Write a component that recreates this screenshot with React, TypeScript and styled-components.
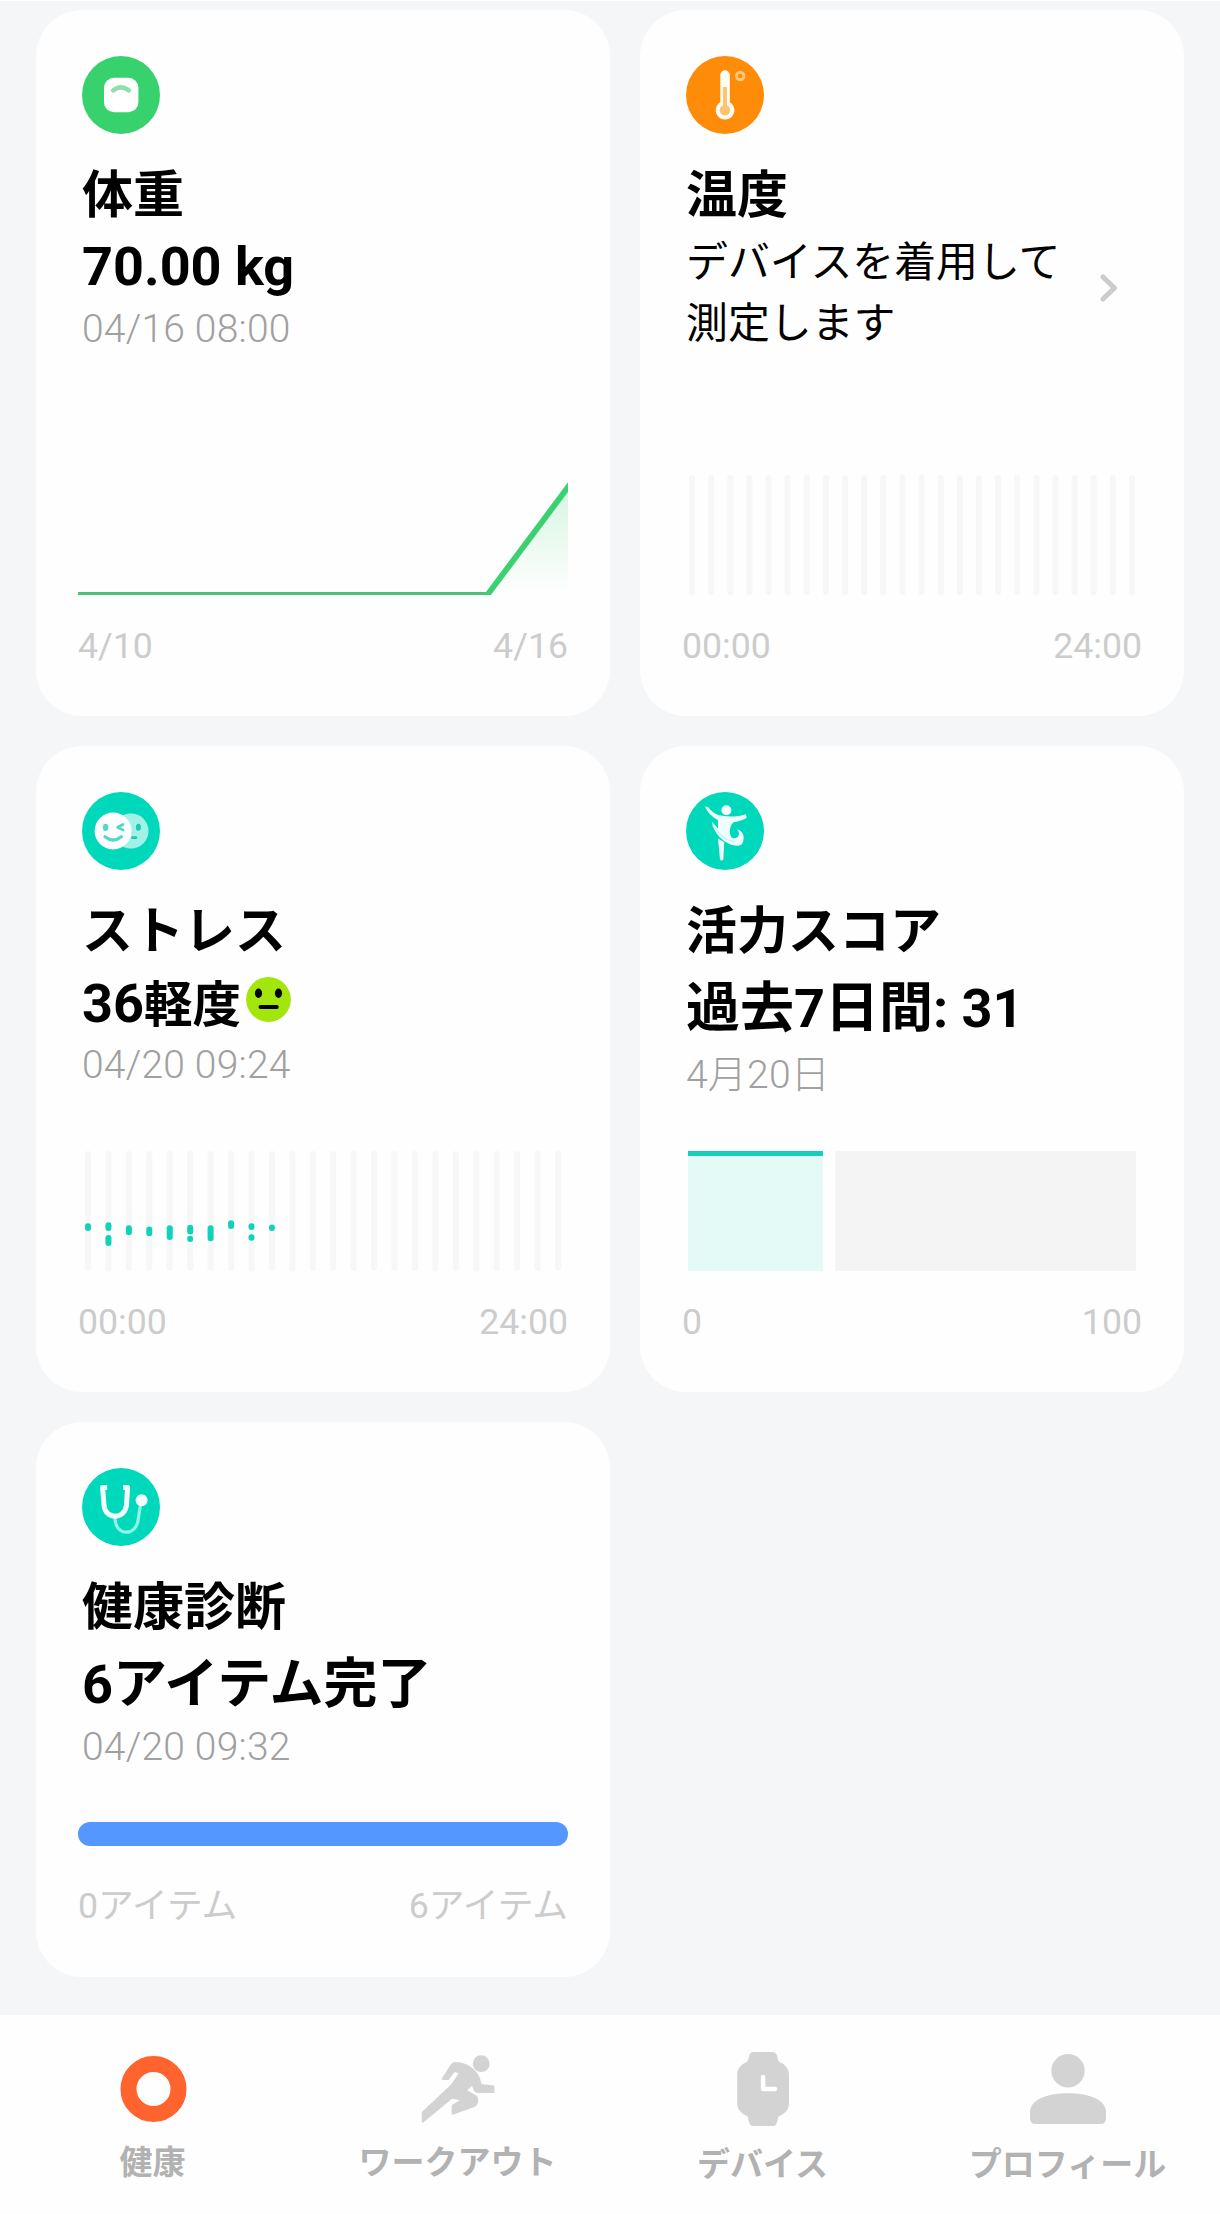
import React from 'react';
import styled, { createGlobalStyle } from 'styled-components';

const GlobalStyle = createGlobalStyle`
  *, *::before, *::after { box-sizing: border-box; }
  body {
    margin: 0;
    background: #f5f6f8;
    font-family: Roboto, "Noto Sans CJK JP", sans-serif;
    color: #000;
  }
  svg { display: block; flex: none; }
`;

const Screen = styled.div`
  width: 1220px;
  height: 2214px;
  display: flex;
  flex-direction: column;
  background: #f5f6f8;
  border-top: 1px solid #fff;
  overflow: hidden;
`;

const CardGrid = styled.main`
  flex: 1;
  display: grid;
  grid-template-columns: 574px 544px;
  grid-template-rows: 706px 646px 555px;
  gap: 30px;
  padding: 9px 36px 0;
`;

const Card = styled.section`
  display: flex;
  flex-direction: column;
  padding: 46px 42px 46px;
  border-radius: 46px;
  background: #fefefe;
`;

const Summary = styled.div`
  display: flex;
  flex-direction: column;
  padding-left: 4px;
`;

const Title = styled.h2`
  margin: 25px 0 -1px;
  font-size: 51px;
  font-weight: 700;
  line-height: 73px;
  white-space: nowrap;
`;

const Value = styled.div<{ $tall?: boolean }>`
  display: flex;
  align-items: center;
  height: ${(p) => (p.$tall ? 81 : 71)}px;
  padding-top: ${(p) => (p.$tall ? 1 : 0)}px;
  font-size: 54px;
  font-weight: 700;
  line-height: 71px;
  white-space: nowrap;
`;

const Reading = styled.span`
  padding-top: 3px;
`;

const Level = styled.span`
  font-size: 48.5px;
  margin-right: 5px;
`;

const DateText = styled.time<{ $height?: number }>`
  padding-top: 1px;
  font-size: 39px;
  font-weight: 300;
  letter-spacing: 0.22px;
  line-height: ${(p) => p.$height ?? 53}px;
  color: #a0a0a0;
  white-space: nowrap;
`;

const HintRow = styled.div`
  display: flex;
  align-items: center;
  justify-content: space-between;
  padding-right: 24px;
`;

const Hint = styled.p`
  margin: 1px 0 0;
  font-size: 41.9px;
  line-height: 61px;
  white-space: nowrap;
`;

const ChartArea = styled.div<{ $gap?: number }>`
  margin-top: auto;
  margin-bottom: ${(p) => p.$gap ?? 27}px;
`;

const Axis = styled.div<{ $lift?: number }>`
  display: flex;
  justify-content: space-between;
  padding-bottom: ${(p) => p.$lift ?? 0}px;
  font-size: 35.7px;
  line-height: 48px;
  color: #ccc;
`;

const ScoreBar = styled.div`
  display: grid;
  grid-template-columns: 135px 1fr;
  gap: 12px;
  height: 120px;
  padding: 0 6px;
`;

const ScoreDone = styled.div`
  border-top: 5px solid #17cfb8;
  background: #e3faf7;
`;

const ScoreRest = styled.div`
  background: #f4f4f4;
`;

const Progress = styled.div`
  height: 24px;
  border-radius: 12px;
  background: #5497ff;
`;

const TabBar = styled.nav`
  display: grid;
  grid-template-columns: repeat(4, 1fr);
  height: 199px;
  padding-top: 34px;
  background: #fefefe;
`;

const Tab = styled.div`
  display: flex;
  flex-direction: column;
  align-items: center;
`;

const TabLabel = styled.span<{ $drop?: number }>`
  margin-top: ${(p) => 14 + (p.$drop ?? 0)}px;
  font-size: 33px;
  font-weight: 700;
  line-height: 40px;
  color: #b2b2b2;
  white-space: nowrap;
`;

const Badge = ({ color, children }: { color: string; children: React.ReactNode }) => (
  <svg width="78" height="78" viewBox="0 0 78 78">
    <circle cx="39" cy="39" r="39" fill={color} />
    {children}
  </svg>
);

const TEAL = '#00d8bc';

const ScaleIcon = () => (
  <Badge color="#37d26d">
    <rect x="22" y="21.7" width="34.4" height="34.6" rx="10" fill="#fff" />
    <path d="M31.2 34.3Q39 28.6 46.8 34.3" fill="none" stroke="#90dfae" strokeWidth="4.6" strokeLinecap="round" />
  </Badge>
);

const ThermometerIcon = () => (
  <Badge color="#ff8c09">
    <path d="M34.3 19a4.75 4.75 0 0 1 9.5 0v27.2a9.3 9.3 0 1 1-9.5 0z" fill="#fffdf5" />
    <path d="M38.95 31v20" stroke="#ffc26e" strokeWidth="4" />
    <circle cx="38.95" cy="54.3" r="5.3" fill="#ffc26e" />
    <circle cx="54.2" cy="20" r="3.7" fill="none" stroke="#ffc77c" strokeWidth="3" />
  </Badge>
);

const StressIcon = () => (
  <Badge color={TEAL}>
    <circle cx="48.9" cy="39" r="17.6" fill="#a2f1e6" />
    <circle cx="31.1" cy="39" r="18.5" fill="#fff" />
    <g fill="none" stroke="#52d8c6" strokeWidth="2.8" strokeLinecap="round" strokeLinejoin="round">
      <path d="M41 32.4l-5.4 2.9 5.4 2.7" />
      <path d="M23 44.8q8.2 6.4 16.4 0" strokeWidth="3.2" />
    </g>
    <path d="M50.6 45.7h3.2" stroke="#19c9b1" strokeWidth="2.8" strokeLinecap="round" />
    <ellipse cx="23.6" cy="35.3" rx="2.8" ry="3.6" fill="#52d8c6" />
    <ellipse cx="56.4" cy="35.3" rx="2.5" ry="3.5" fill="#19c9b1" />
  </Badge>
);

const VitalityIcon = () => (
  <Badge color={TEAL}>
    <circle cx="40.4" cy="18.3" r="5" fill="#f4fffd" />
    <path
      d="M19 14.3L22.6 15.5C25 19.5 30 22.8 35 23.6C44 25.4 53 24.6 59.8 22.2L60.8 25.7C57 28.6 51 29.4 47.3 30.3C44.6 33 44 36.5 43.8 40C44 44.5 46 46.7 48.8 46.3C53 45.8 54.6 41 51.1 37.3C56 39 57.8 42.5 57.6 46C57.6 51 55.8 53.4 52 53.8C45 54 38 49.4 33.5 45C29 40 26.6 35 25.8 29.7C28 31.7 30.5 34.5 32 36.5L32 28.2C26 25 21 20 19 14.3Z"
      fill="#effffc"
    />
    <path d="M32 46.3Q35 48.8 38.2 50L37.3 67.5Q35.6 69.5 34 67.5Z" fill="#effffc" />
    <path d="M29 36Q37 48 49 50" fill="none" stroke="#bff3ea" strokeWidth="1.2" />
  </Badge>
);

const StethoscopeIcon = () => (
  <Badge color={TEAL}>
    <path
      d="M33 50C33 68.5 54.5 69 56.3 51L58.6 36"
      fill="none"
      stroke="#8df5e7"
      strokeWidth="3.2"
    />
    <path
      d="M25.2 19.4h-4.6L22 37C23 52 43 52 44.5 37L45.6 19.4h-4.6"
      fill="none"
      stroke="#f2fffd"
      strokeWidth="5"
      strokeLinejoin="round"
    />
    <circle cx="59.6" cy="32.3" r="6" fill="#f2fffd" />
  </Badge>
);

const NeutralFace = () => (
  <svg width="45" height="45" viewBox="0 0 45 45" transform="translate(0 -3)">
    <circle cx="22.5" cy="22.5" r="22.4" fill="#a2e60c" />
    <ellipse cx="12.5" cy="16.3" rx="3.6" ry="4.7" />
    <ellipse cx="32.5" cy="16.3" rx="3.6" ry="4.7" />
    <path d="M14.6 30h16" stroke="#000" strokeWidth="4.2" strokeLinecap="round" />
  </svg>
);

const Chevron = () => (
  <svg width="18" height="28" viewBox="0 0 18 28" transform="translate(0 -5)">
    <path d="M3 3l11.4 11L3 25" fill="none" stroke="#ccc" strokeWidth="5" strokeLinecap="round" strokeLinejoin="round" />
  </svg>
);

const WeightChart = () => (
  <svg width="490" height="120" viewBox="0 0 490 120">
    <defs>
      <linearGradient id="weightFill" x1="0" y1="0" x2="0" y2="1">
        <stop offset="0" stopColor="#37d26d" stopOpacity="0.2" />
        <stop offset="1" stopColor="#37d26d" stopOpacity="0" />
      </linearGradient>
    </defs>
    <path d="M410 118.5L490 11V118.5Z" fill="url(#weightFill)" />
    <path d="M0 118.5H411" stroke="#50bf7a" strokeWidth="3" />
    <path d="M409 120.4L494 6.8" fill="none" stroke="#3bd070" strokeWidth="5.8" />
  </svg>
);

type Sample = { hour: number; from: number; to: number };

const STRESS_SAMPLES: Sample[] = [
  { hour: 0, from: 72.3, to: 80 },
  { hour: 1, from: 71.3, to: 80 },
  { hour: 1, from: 84, to: 95 },
  { hour: 2, from: 74.3, to: 84.3 },
  { hour: 3, from: 75.5, to: 85.3 },
  { hour: 4, from: 74.3, to: 89 },
  { hour: 5, from: 73.7, to: 83.5 },
  { hour: 5, from: 84.8, to: 91 },
  { hour: 6, from: 74.3, to: 90.3 },
  { hour: 7, from: 69.3, to: 78 },
  { hour: 8, from: 72.3, to: 79 },
  { hour: 8, from: 83.2, to: 89.7 },
  { hour: 9, from: 73.6, to: 80 },
];

const HourChart = ({ width, samples = [] }: { width: number; samples?: Sample[] }) => {
  const barX = (hour: number) => 7 + (hour * (width - 20)) / 23;
  return (
    <svg width={width} height="120" viewBox={`0 0 ${width} 120`}>
      {Array.from({ length: 24 }, (_, hour) => (
        <rect key={hour} x={barX(hour)} width="6" height="120" rx="3" fill="#f6f7f8" />
      ))}
      {samples.map((s) => (
        <rect
          key={`${s.hour}-${s.from}`}
          x={barX(s.hour)}
          y={s.from}
          width="6"
          height={s.to - s.from}
          rx="3"
          fill="#0fd2b9"
        />
      ))}
    </svg>
  );
};

const HealthTabIcon = () => (
  <svg width="80" height="80" viewBox="0 0 80 80">
    <circle cx="40.5" cy="40" r="25" fill="none" stroke="#ff632e" strokeWidth="16" />
  </svg>
);

const WorkoutTabIcon = () => (
  <svg width="80" height="80" viewBox="0 0 80 80" fill="#d3d3d3">
    <circle cx="63.2" cy="14.7" r="8.4" />
    <path d="M37 13Q34 13 32.4 16L23.9 29.6Q23.4 31 24.5 31H30.5L36.3 23.6Q37.2 22.8 38.5 23.5L40.5 24.6Q36 31.5 33 35.5L4.4 62.5Q3.8 63.2 3.8 64.2V73Q4.4 74.3 5.6 73.2L34.1 49.8L42 51.3L34.6 55.6Q33.7 56.2 33.7 57.2V65Q34.2 66.2 35.4 65.5L56.5 58Q59.7 56.4 60.1 53.2V49.5Q60 47.8 58.2 46.6L49.1 41.2L54 36.8L55.8 41.5Q57 43.8 59.6 43.9H75.4Q76.4 43.8 76.4 42.7V37.6Q76.3 36.8 75.4 36.6L63.6 35C62 27.5 60 24.5 55.6 20.2C51 15.6 45 13.3 37 13Z" />
  </svg>
);

const DeviceTabIcon = () => (
  <svg width="80" height="80" viewBox="0 0 80 80">
    <path
      d="M30.8 3H49.4Q53 3 54 6.6L55.2 11.5Q55.5 12.7 56.8 13.3C62.5 15.6 66 20 66 26V54C66 60 62.5 64.4 56.8 66.7Q55.5 67.3 55.2 68.5L54 73.4Q53 77 49.4 77H30.8Q27.2 77 26.2 73.4L25 68.5Q24.7 67.3 23.4 66.7C17.7 64.4 14.2 60 14.2 54V26C14.2 20 17.7 15.6 23.4 13.3Q24.7 12.7 25 11.5L26.2 6.6Q27.2 3 30.8 3Z"
      fill="#d3d3d3"
    />
    <path d="M40.1 28V40H52" fill="none" stroke="#fff" strokeWidth="4.5" strokeLinecap="round" strokeLinejoin="round" />
  </svg>
);

const ProfileTabIcon = () => (
  <svg width="80" height="80" viewBox="0 0 80 80" fill="#d3d3d3">
    <circle cx="40" cy="21.7" r="16.7" />
    <path d="M2 63C2 51 18.5 44.3 40 44.3S78 51 78 63V69Q78 75 72 75H8Q2 75 2 69Z" />
  </svg>
);

export default function App() {
  return (
    <>
      <GlobalStyle />
      <Screen>
        <CardGrid>
          <Card>
            <Summary>
              <ScaleIcon />
              <Title>体重</Title>
              <Value>70.00 kg</Value>
              <DateText>04/16 08:00</DateText>
            </Summary>
            <ChartArea>
              <WeightChart />
            </ChartArea>
            <Axis>
              <span>4/10</span>
              <span>4/16</span>
            </Axis>
          </Card>

          <Card>
            <Summary>
              <ThermometerIcon />
              <Title>温度</Title>
              <HintRow>
                <Hint>
                  デバイスを着用して
                  <br />
                  測定します
                </Hint>
                <Chevron />
              </HintRow>
            </Summary>
            <ChartArea>
              <HourChart width={460} />
            </ChartArea>
            <Axis>
              <span>00:00</span>
              <span>24:00</span>
            </Axis>
          </Card>

          <Card>
            <Summary>
              <StressIcon />
              <Title>ストレス</Title>
              <Value>
                <Reading>
                  36<Level>軽度</Level>
                </Reading>
                <NeutralFace />
              </Value>
              <DateText>04/20 09:24</DateText>
            </Summary>
            <ChartArea>
              <HourChart width={490} samples={STRESS_SAMPLES} />
            </ChartArea>
            <Axis>
              <span>00:00</span>
              <span>24:00</span>
            </Axis>
          </Card>

          <Card>
            <Summary>
              <VitalityIcon />
              <Title>活力スコア</Title>
              <Value $tall>過去7日間: 31</Value>
              <DateText>4月20日</DateText>
            </Summary>
            <ChartArea>
              <ScoreBar>
                <ScoreDone />
                <ScoreRest />
              </ScoreBar>
            </ChartArea>
            <Axis>
              <span>0</span>
              <span>100</span>
            </Axis>
          </Card>

          <Card>
            <Summary>
              <StethoscopeIcon />
              <Title>健康診断</Title>
              <Value $tall>6アイテム完了</Value>
              <DateText $height={45}>04/20 09:32</DateText>
            </Summary>
            <ChartArea $gap={36}>
              <Progress />
            </ChartArea>
            <Axis $lift={1}>
              <span>0アイテム</span>
              <span>6アイテム</span>
            </Axis>
          </Card>
        </CardGrid>

        <TabBar>
          <Tab>
            <HealthTabIcon />
            <TabLabel>健康</TabLabel>
          </Tab>
          <Tab>
            <WorkoutTabIcon />
            <TabLabel>ワークアウト</TabLabel>
          </Tab>
          <Tab>
            <DeviceTabIcon />
            <TabLabel $drop={2}>デバイス</TabLabel>
          </Tab>
          <Tab>
            <ProfileTabIcon />
            <TabLabel $drop={2}>プロフィール</TabLabel>
          </Tab>
        </TabBar>
      </Screen>
    </>
  );
}
